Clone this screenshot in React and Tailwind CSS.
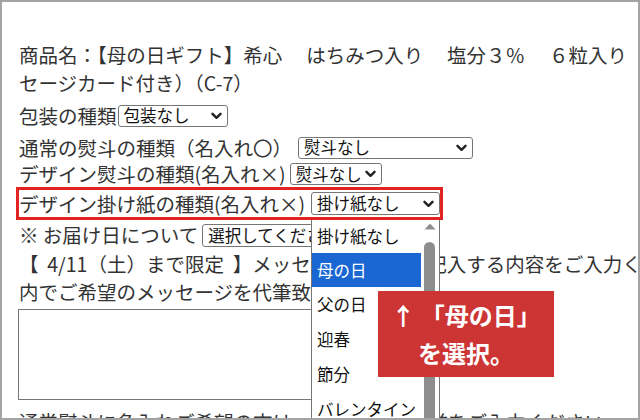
import React from "react";

const Chevron = ({ className = "" }) => (
  <svg width="11" height="8" viewBox="0 0 11 8" className={className}>
    <polyline points="1.5,1.8 5.5,5.8 9.5,1.8" fill="none" stroke="#222" strokeWidth="2.4" strokeLinecap="round" strokeLinejoin="round" />
  </svg>
);

const Sel = ({ label, className = "", chev = true }) => (
  <div className={`flex items-center justify-between shrink-0 border border-[#767676] rounded-[3px] bg-white pl-[5px] pr-[5px] text-[16.5px] text-[#111] ${className}`}>
    <span className="leading-none">{label}</span>
    {chev && <Chevron />}
  </div>
);

export default function App() {
  const font = { fontFamily: '"Noto Sans CJK JP", "Noto Sans", sans-serif' };
  return (
    <div
      className="w-[640px] h-[420px] relative overflow-hidden bg-white border-2 border-[#a3a3a3] text-[#333] text-[19.5px] whitespace-nowrap"
      style={font}
    >
      <div className="flex flex-col pl-[17px] pt-[39px]">
        <div className="h-[28px] flex items-center">商品名：【母の日ギフト】希心　{"\u00a0"}はちみつ入り　{"\u00a0"}塩分３％　{"\u00a0"}６粒入り</div>
        <div className="h-[28px] flex items-center">セージカード付き）（C-7）</div>
        <div className="h-[37px] flex items-center">
          <span>包装の種類</span>
          <Sel label="包装なし" className="ml-[1px] w-[110px] h-[22px]" />
        </div>
        <div className="h-[27px] flex items-center">
          <span>通常の熨斗の種類（名入れ〇）</span>
          <Sel label="熨斗なし" className="ml-[6px] w-[175px] h-[22px]" />
        </div>
        <div className="h-[26px] flex items-center">
          <span>デザイン熨斗の種類(名入れ×)</span>
          <Sel label="熨斗なし" className="ml-[4px] w-[92px] h-[22px]" />
        </div>
        <div className="h-[33px] w-[427px] -ml-[3px] border-[3px] border-[#e32222] flex items-center justify-between">
          <span>デザイン掛け紙の種類(名入れ×)</span>
          <Sel label="掛け紙なし" className="w-[129px] h-[23px]" />
        </div>
        <div className="h-[30px] flex items-center">
          <span>※ お届け日について</span>
          <Sel label="選択してください" className="ml-[4px] w-[160px] h-[23px]" />
        </div>
        <div className="h-[27px] flex items-center">【{"\u00a0\u00a0"}4/11（土）まで限定{"\u00a0\u00a0"}】メッセージカードに記入する内容をご入力ください（３０文字以</div>
        <div className="h-[29px] flex items-center">内でご希望のメッセージを代筆致します。</div>
        <div className="mt-[3px] -ml-[1px] w-[400px] h-[91px] border border-[#767676] bg-white shrink-0"></div>
        <div className="mt-[8px] h-[28px] flex items-center shrink-0">通常熨斗に名入れご希望の方は、下記欄にお名前をご入力ください。</div>
      </div>

      {/* dropdown list */}
      <div className="absolute left-[309px] top-[218px] w-[129px] h-[210px] bg-white border-x border-[#767676] flex text-[16.5px] text-[#111]">
        <div className="w-[109px] flex flex-col">
          <div className="h-[33px] flex items-center pl-[5px]">掛け紙なし</div>
          <div className="h-[34px] flex items-center pl-[5px] bg-[#1a66d2] text-white">母の日</div>
          <div className="h-[35px] flex items-center pl-[5px]">父の日</div>
          <div className="h-[35px] flex items-center pl-[5px]">迎春</div>
          <div className="h-[35px] flex items-center pl-[5px]">節分</div>
          <div className="h-[35px] flex items-center pl-[5px]">バレンタイン</div>
        </div>
        <div className="flex-1 flex flex-col items-center pt-[3px]">
          <svg width="12" height="7" viewBox="0 0 12 7">
            <polygon points="6,0.5 11.5,6.5 0.5,6.5" fill="#8f8f8f" />
          </svg>
          <div className="mt-[12px] w-[11px] flex-1 bg-[#8d8d8d] rounded-t-[6px] ml-[-2px]"></div>
        </div>
      </div>

      {/* callout */}
      <div className="absolute left-[376px] top-[289px] w-[176px] h-[86px] bg-[#cd3535] text-white text-[24px] font-bold flex flex-col items-center justify-center">
        <div className="h-[38px] flex items-center">↑ 「母の日」</div>
        <div className="h-[38px] flex items-center">を選択。</div>
      </div>
    </div>
  );
}
